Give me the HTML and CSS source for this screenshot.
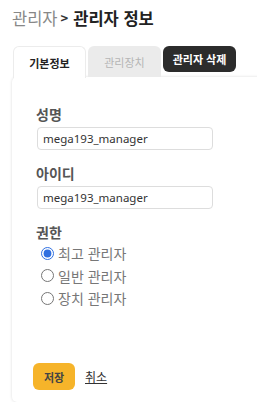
FILE: index.html
```html
<!DOCTYPE html>
<html lang="ko">
<head>
<meta charset="utf-8">
<link rel="stylesheet" href="styles.css">
</head>
<body>
<div class="page">
  <h1 class="crumb"><span class="crumb-parent">관리자</span><span class="crumb-sep">&gt;</span><span class="crumb-current">관리자 정보</span></h1>
  <div class="tabs">
    <div class="tab active">기본정보</div>
    <div class="tab inactive">관리장치</div>
    <button class="tab-danger">관리자 삭제</button>
  </div>
  <div class="card">
    <div class="field">
      <label class="label">성명</label>
      <input class="input" type="text" value="mega193_manager">
    </div>
    <div class="field">
      <label class="label">아이디</label>
      <input class="input" type="text" value="mega193_manager">
    </div>
    <div class="field">
      <div class="label">권한</div>
      <label class="radio"><input type="radio" name="role" checked><span>최고 관리자</span></label>
      <label class="radio"><input type="radio" name="role"><span>일반 관리자</span></label>
      <label class="radio"><input type="radio" name="role"><span>장치 관리자</span></label>
    </div>
    <div class="actions">
      <button class="save">저장</button>
      <a class="cancel" href="#">취소</a>
    </div>
  </div>
</div>
</body>
</html>
```
FILE: styles.css
```css
* { box-sizing: border-box; }
html, body { margin: 0; padding: 0; background: #fff; }
body { font-family: "Noto Sans CJK KR", "Noto Sans", sans-serif; color: #333; }
.page { padding: 6px 0 0 12px; width: 257px; overflow: hidden; }
.crumb { margin: 0; font-size: 16.5px; line-height: 24px; font-weight: 400; display: flex; align-items: center; }
.crumb-parent { color: #888; }
.crumb-sep { color: #333; font-size: 13px; margin: 0 5px 0 3px; font-weight: 700; }
.crumb-current { color: #222; font-weight: 700; }
.tabs { display: flex; align-items: flex-start; margin-top: 16px; padding-left: 1px; }
.tab { width: 73px; height: 31px; display: flex; align-items: center; justify-content: center; font-size: 11px; border-radius: 6px 6px 0 0; }
.tab.active { background: #fff; color: #222; font-weight: 700; border: 1px solid #ececec; border-bottom: none; position: relative; z-index: 1; margin-bottom: -1px; height: 32px; }
.tab.inactive { background: #ebebeb; color: #b5b5b5; margin-left: 2px; }
.tab-danger { margin-left: 2px; width: 73px; height: 26px; background: #2c2c2c; color: #fff; border: none; border-radius: 6px; font: 700 11px "Noto Sans CJK KR", sans-serif; padding: 0; }
.card { width: 260px; height: 325px; border-radius: 5px; background: #fff; box-shadow: 0 0 3px rgba(0,0,0,0.15); padding: 27px 0 0 24px; display: flex; flex-direction: column; }
.field { display: flex; flex-direction: column; margin-bottom: 13px; }
.label { font-size: 14px; font-weight: 700; color: #555; line-height: 20px; }
.input { width: 176px; height: 23px; margin: 3px 0 0 1px; border: 1px solid #ddd; border-radius: 4px; padding: 0 5px; font: 400 11.5px "Noto Sans", "Noto Sans CJK KR", sans-serif; color: #333; }
.radio { display: flex; align-items: center; height: 22.5px; font-size: 14px; color: #777; margin-left: 4px; }
.radio input { margin: 0 4px 0 1px; width: 13px; height: 13px; accent-color: #2f6fe0; }
.actions { margin-top: auto; margin-bottom: 12px; margin-left: -3px; display: flex; align-items: center; gap: 10px; }
.save { width: 42px; height: 27px; background: #f6b42a; border: none; border-radius: 6px; font: 700 11px "Noto Sans CJK KR", sans-serif; color: #444; padding: 0; }
.cancel { font-size: 12px; color: #333; text-decoration: underline; }
```
